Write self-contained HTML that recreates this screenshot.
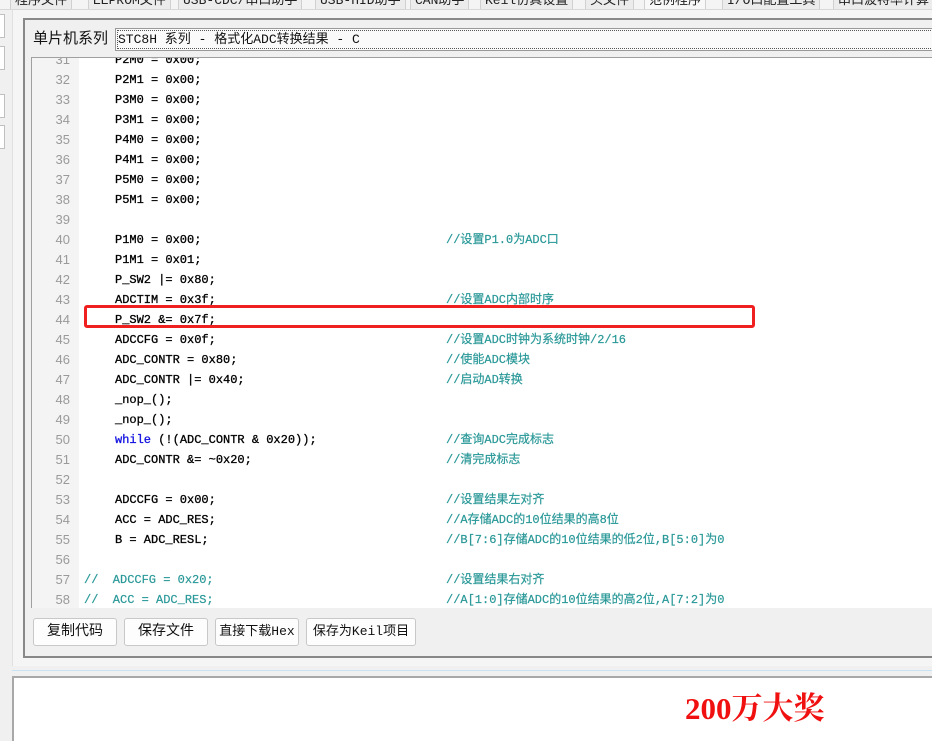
<!DOCTYPE html>
<html><head><meta charset="utf-8"><style>
body{margin:0;width:932px;height:739px;overflow:hidden;background:#f0f0f0;position:relative;font-family:"Liberation Sans","Noto Sans CJK SC",sans-serif;}
.abs{position:absolute}
.tab{position:absolute;top:-9px;height:17px;border:1px solid #d0d0d0;background:#ececec;font-size:13px;line-height:17px;padding:0 4px;white-space:nowrap;color:#222;font-family:"Liberation Mono","Noto Sans CJK SC",monospace}
.code{position:absolute;left:31px;top:57px;width:901px;height:550px;background:#fff;overflow:hidden;border-left:1px solid #a0a0a0;border-top:1px solid #a0a0a0}
.gut{position:absolute;left:0;top:0;width:47px;height:550px;background:#f4f4f4}
.ln{position:absolute;left:0;width:38px;text-align:right;color:#9a9a9a;font-size:13px;font-family:"Liberation Sans",sans-serif;line-height:20px}
.t{position:absolute;left:83px;font-family:"Liberation Mono","Noto Sans CJK SC",monospace;font-size:12px;line-height:20px;color:#000;white-space:pre;-webkit-text-stroke:0.3px #000}
.c{position:absolute;left:414px;font-family:"Liberation Mono","Noto Sans CJK SC",monospace;font-size:12px;line-height:20px;color:#2a9898;white-space:pre;-webkit-text-stroke:0.2px #2a9898}
.btn{position:absolute;top:618px;height:26px;background:#fdfdfd;border:1px solid #c8c8c8;border-radius:3px;font-size:14px;line-height:26px;text-align:center;color:#111;font-family:"Liberation Mono","Noto Sans CJK SC",monospace;white-space:nowrap}
</style></head><body>
<div class="abs" style="left:0;top:0;width:932px;height:9px;background:#f4f4f4;overflow:hidden">
<div class="tab" style="left:10px">程序文件</div>
<div class="tab" style="left:88px">EEPROM文件</div>
<div class="tab" style="left:178px">USB-CDC/串口助手</div>
<div class="tab" style="left:315px">USB-HID助手</div>
<div class="tab" style="left:410px">CAN助手</div>
<div class="tab" style="left:480px">Keil仿真设置</div>
<div class="tab" style="left:585px">头文件</div>
<div class="tab" style="left:644px;background:#f8f8f8">范例程序</div>
<div class="tab" style="left:722px">I/O口配置工具</div>
<div class="tab" style="left:833px">串口波特率计算</div>
</div>
<div class="abs" style="left:0;top:9px;width:932px;height:1px;background:#d8d8d8"></div>
<div class="abs" style="left:0;top:14px;width:4px;height:22px;border:1px solid #c0c0c0;background:#fff;border-left:none"></div>
<div class="abs" style="left:0;top:46px;width:4px;height:22px;border:1px solid #c0c0c0;background:#fff;border-left:none"></div>
<div class="abs" style="left:0;top:94px;width:4px;height:22px;border:1px solid #c0c0c0;background:#fff;border-left:none"></div>
<div class="abs" style="left:0;top:125px;width:4px;height:22px;border:1px solid #c0c0c0;background:#fff;border-left:none"></div>
<div class="abs" style="left:12px;top:10px;width:920px;height:656px;background:#f5f5f5;border-left:1px solid #e0e0e0"></div>
<div class="abs" style="left:23px;top:18px;width:909px;height:636px;border-left:2px solid #888;border-top:2px solid #888;border-bottom:2px solid #888;background:#f0f0f0"></div>
<div class="abs" style="left:33px;top:29px;font-size:15px;line-height:20px;color:#111">单片机系列</div>
<div class="abs" style="left:115px;top:28px;width:817px;height:21px;background:#fafafa;border:1px solid #999;border-right:none"></div>
<div class="abs" style="left:117px;top:30px;width:815px;height:17px;border:1px dotted #555;border-right:none;font-family:'Liberation Mono','Noto Sans CJK SC',monospace;font-size:13px;line-height:17px;color:#111;white-space:pre">STC8H 系列 - 格式化ADC转换结果 - C</div>
<div class="code"><div class="gut"></div>
<div class="ln" style="top:-8px">31</div><div class="t" style="top:-8px">P2M0 = 0x00;</div>
<div class="ln" style="top:12px">32</div><div class="t" style="top:12px">P2M1 = 0x00;</div>
<div class="ln" style="top:32px">33</div><div class="t" style="top:32px">P3M0 = 0x00;</div>
<div class="ln" style="top:52px">34</div><div class="t" style="top:52px">P3M1 = 0x00;</div>
<div class="ln" style="top:72px">35</div><div class="t" style="top:72px">P4M0 = 0x00;</div>
<div class="ln" style="top:92px">36</div><div class="t" style="top:92px">P4M1 = 0x00;</div>
<div class="ln" style="top:112px">37</div><div class="t" style="top:112px">P5M0 = 0x00;</div>
<div class="ln" style="top:132px">38</div><div class="t" style="top:132px">P5M1 = 0x00;</div>
<div class="ln" style="top:152px">39</div>
<div class="ln" style="top:172px">40</div><div class="t" style="top:172px">P1M0 = 0x00;</div><div class="c" style="top:172px">//设置P1.0为ADC口</div>
<div class="ln" style="top:192px">41</div><div class="t" style="top:192px">P1M1 = 0x01;</div>
<div class="ln" style="top:212px">42</div><div class="t" style="top:212px">P_SW2 |= 0x80;</div>
<div class="ln" style="top:232px">43</div><div class="t" style="top:232px">ADCTIM = 0x3f;</div><div class="c" style="top:232px">//设置ADC内部时序</div>
<div class="ln" style="top:252px">44</div><div class="t" style="top:252px">P_SW2 &amp;= 0x7f;</div>
<div class="ln" style="top:272px">45</div><div class="t" style="top:272px">ADCCFG = 0x0f;</div><div class="c" style="top:272px">//设置ADC时钟为系统时钟/2/16</div>
<div class="ln" style="top:292px">46</div><div class="t" style="top:292px">ADC_CONTR = 0x80;</div><div class="c" style="top:292px">//使能ADC模块</div>
<div class="ln" style="top:312px">47</div><div class="t" style="top:312px">ADC_CONTR |= 0x40;</div><div class="c" style="top:312px">//启动AD转换</div>
<div class="ln" style="top:332px">48</div><div class="t" style="top:332px">_nop_();</div>
<div class="ln" style="top:352px">49</div><div class="t" style="top:352px">_nop_();</div>
<div class="ln" style="top:372px">50</div><div class="t" style="top:372px"><span style="color:#1010e0;-webkit-text-stroke:0.3px #1010e0">while</span> (!(ADC_CONTR &amp; 0x20));</div><div class="c" style="top:372px">//查询ADC完成标志</div>
<div class="ln" style="top:392px">51</div><div class="t" style="top:392px">ADC_CONTR &amp;= ~0x20;</div><div class="c" style="top:392px">//清完成标志</div>
<div class="ln" style="top:412px">52</div>
<div class="ln" style="top:432px">53</div><div class="t" style="top:432px">ADCCFG = 0x00;</div><div class="c" style="top:432px">//设置结果左对齐</div>
<div class="ln" style="top:452px">54</div><div class="t" style="top:452px">ACC = ADC_RES;</div><div class="c" style="top:452px">//A存储ADC的10位结果的高8位</div>
<div class="ln" style="top:472px">55</div><div class="t" style="top:472px">B = ADC_RESL;</div><div class="c" style="top:472px">//B[7:6]存储ADC的10位结果的低2位,B[5:0]为0</div>
<div class="ln" style="top:492px">56</div>
<div class="ln" style="top:512px">57</div><div class="c" style="top:512px;left:52px">//  ADCCFG = 0x20;</div><div class="c" style="top:512px">//设置结果右对齐</div>
<div class="ln" style="top:532px">58</div><div class="c" style="top:532px;left:52px">//  ACC = ADC_RES;</div><div class="c" style="top:532px">//A[1:0]存储ADC的10位结果的高2位,A[7:2]为0</div>
</div>
<div class="abs" style="left:84px;top:305px;width:665px;height:17px;border:3px solid #f02020;border-radius:3px"></div>
<div class="btn" style="left:33px;width:82px">复制代码</div>
<div class="btn" style="left:124px;width:82px">保存文件</div>
<div class="btn" style="left:215px;width:82px;font-size:13px">直接下载Hex</div>
<div class="btn" style="left:306px;width:108px;font-size:13px">保存为Keil项目</div>
<div class="abs" style="left:12px;top:670px;width:920px;height:1px;background:#c8e4f4"></div>
<div class="abs" style="left:12px;top:676px;width:920px;height:63px;background:#fff;border-left:2px solid #a8a8a8;border-top:2px solid #a8a8a8"></div>
<div class="abs" style="left:685px;top:690px;font-family:'Liberation Serif','Noto Serif CJK SC',serif;font-weight:bold;font-size:31px;line-height:38px;color:#f01010">200万大奖</div>
</body></html>
